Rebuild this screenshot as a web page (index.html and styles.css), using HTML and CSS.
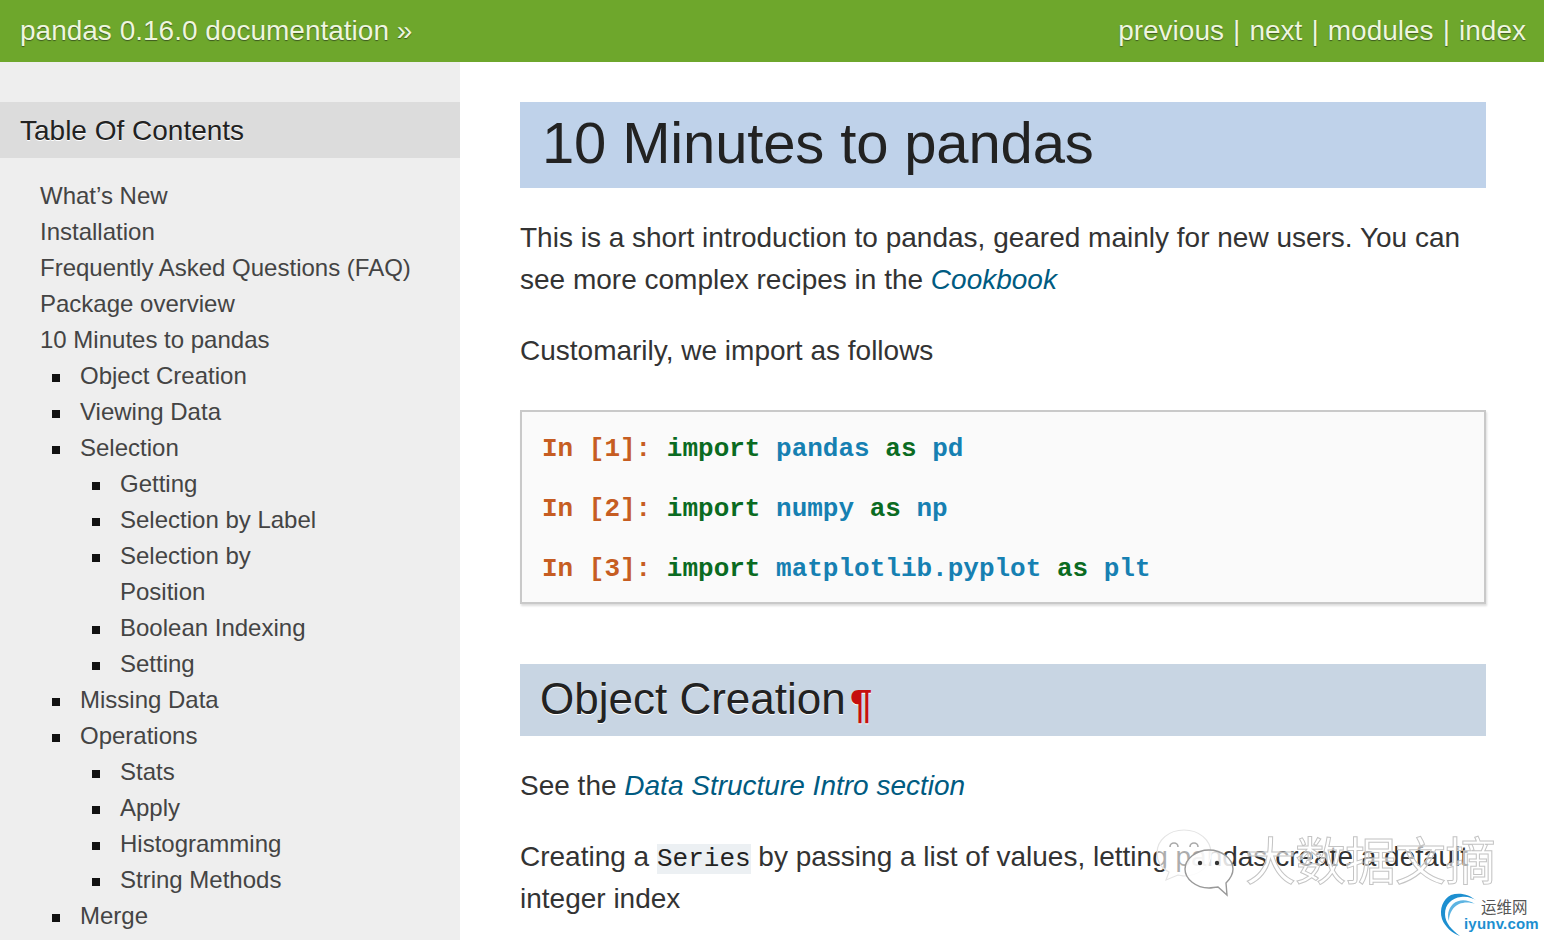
FILE: index.html
```html
<!DOCTYPE html>
<html lang="en">
<head>
<meta charset="utf-8">
<title>10 Minutes to pandas</title>
<link rel="stylesheet" href="styles.css">
</head>
<body>
<header class="topbar">
  <a class="crumb">pandas 0.16.0 documentation »</a>
  <nav class="relnav"><a>previous</a> | <a>next</a> | <a>modules</a> | <a>index</a></nav>
</header>
<div class="page">
  <aside class="sidebar">
    <h3 class="toc-title">Table Of Contents</h3>
    <ul class="toc">
      <li>What’s New</li>
      <li>Installation</li>
      <li>Frequently Asked Questions (FAQ)</li>
      <li>Package overview</li>
      <li>10 Minutes to pandas
        <ul>
          <li>Object Creation</li>
          <li>Viewing Data</li>
          <li>Selection
            <ul>
              <li>Getting</li>
              <li>Selection by Label</li>
              <li>Selection by Position</li>
              <li>Boolean Indexing</li>
              <li>Setting</li>
            </ul>
          </li>
          <li>Missing Data</li>
          <li>Operations
            <ul>
              <li>Stats</li>
              <li>Apply</li>
              <li>Histogramming</li>
              <li>String Methods</li>
            </ul>
          </li>
          <li>Merge</li>
        </ul>
      </li>
    </ul>
  </aside>
  <main class="content">
    <h1>10 Minutes to pandas</h1>
    <p class="intro">This is a short introduction to pandas, geared mainly for new users. You can see more complex recipes in the <a class="ref">Cookbook</a></p>
    <p class="follows">Customarily, we import as follows</p>
    <pre class="code"><span class="pr">In [1]:</span> <span class="kw">import</span> <span class="nm">pandas</span> <span class="kw">as</span> <span class="nm">pd</span>

<span class="pr">In [2]:</span> <span class="kw">import</span> <span class="nm">numpy</span> <span class="kw">as</span> <span class="nm">np</span>

<span class="pr">In [3]:</span> <span class="kw">import</span> <span class="nm">matplotlib.pyplot</span> <span class="kw">as</span> <span class="nm">plt</span></pre>
    <h2>Object Creation <span class="pilcrow">¶</span></h2>
    <p class="see">See the <a class="ref">Data Structure Intro section</a></p>
    <p class="creating">Creating a <code>Series</code> by passing a list of values, letting pandas create a default integer index</p>
  </main>
</div>
<div class="wm">
  <svg class="wm-chat" viewBox="0 0 80 70" width="80" height="70" aria-hidden="true">
    <path class="wm-back" d="M29 2C14 2 2 12 2 25c0 8 4 15 12 19l-3 8 12-5c2 0 4 1 6 1 15 0 27-10 27-23S44 2 29 2z"/>
    <path class="wm-eye" d="M15 19a4 4 0 0 1 8 0M35 19a4 4 0 0 1 8 0"/>
    <path class="wm-front" d="M54 22c-13 0-24 9-24 19s11 19 24 19c3 0 6-1 9-1l9 8-1-12c4-4 7-9 7-14 0-10-11-19-24-19z"/>
    <circle class="wm-dot" cx="45" cy="35" r="2.2"/><circle class="wm-dot" cx="62" cy="35" r="2.2"/>
  </svg>
  <span class="wm-text">大数据文摘</span>
</div>
<div class="logo">
  <svg class="logo-arc" viewBox="0 0 44 47" width="44" height="47" aria-hidden="true">
    <path class="arc-out" d="M38 8C30 1 20-1 12 2 4 6 0 16 3 26c3 8 10 14 18 17C13 37 6 30 6 21 6 11 13 5 22 4c6-1 12 1 16 4z"/>
    <path class="arc-in" d="M36 11C28 6 20 6 14 11 9 16 8 23 10 28c0-8 4-14 10-17 5-2 11-2 16 0z"/>
  </svg>
  <div class="logo-cn">运维网</div>
  <div class="logo-en">iyunv.com</div>
</div>
</body>
</html>
```
FILE: styles.css
```css
html, body { margin: 0; padding: 0; }
body {
  height: 940px;
  overflow: hidden;
  position: relative;
  background: #fff;
  color: #333;
  font-family: "Liberation Sans", Arial, sans-serif;
  font-size: 28px;
}
.topbar {
  height: 62px;
  box-sizing: border-box;
  background: #6ea72c;
  color: #eef6de;
  display: flex;
  justify-content: space-between;
  align-items: center;
  padding: 0 18px 0 20px;
  font-size: 28px;
  text-shadow: 0 1px 1px #3d5a20;
}
.relnav { word-spacing: 1.3px; }
.page { display: flex; height: 878px; overflow: hidden; }
.sidebar {
  width: 460px;
  flex: none;
  background: #eee;
  padding-top: 40px;
  box-sizing: border-box;
  color: #444;
  font-size: 24px;
  line-height: 36px;
}
.toc-title {
  margin: 0;
  height: 56px;
  line-height: 58px;
  padding-left: 20px;
  background: #dcdcdc;
  color: #222;
  font-size: 28px;
  font-weight: normal;
  text-shadow: 0 1px 0 #fff;
}
.toc, .toc ul { list-style: none; margin: 0; padding: 0; }
.toc { padding: 20px 40px 0; width: 380px; }
.toc ul { padding-left: 40px; margin-right: 40px; }
.toc ul li { position: relative; }
.toc ul li::before {
  content: "";
  position: absolute;
  left: -28px;
  top: 16px;
  width: 8px;
  height: 8px;
  background: #111;
}
.content {
  flex: 1;
  padding: 40px 58px 0 60px;
  min-width: 0;
}
h1 {
  margin: 0;
  height: 86px;
  line-height: 82px;
  padding-left: 22px;
  background: #bfd2ea;
  color: #222;
  font-size: 58px;
  font-weight: normal;
  letter-spacing: -0.15px;
}
p { margin: 0; line-height: 42px; color: #333; }
.intro { margin-top: 29px; }
.follows { margin-top: 29px; }
.ref { color: #005b81; font-style: italic; }
.code {
  margin: 38px 0 0;
  height: 194px;
  box-sizing: border-box;
  padding: 22px 20px 0;
  background: #fafafa;
  border: 2px solid #c9c9c9;
  box-shadow: 1px 2px 2px #ddd;
  font-family: "Liberation Mono", "Courier New", monospace;
  font-size: 26px;
  font-weight: bold;
  line-height: 30px;
}
.pr { color: #c65d22; }
.kw { color: #0a6b22; }
.nm { color: #1680b2; }
h2 {
  margin: 60px 0 0;
  height: 72px;
  line-height: 70px;
  padding-left: 20px;
  background: #c8d5e3;
  color: #222;
  font-size: 44px;
  font-weight: normal;
  text-shadow: 0 1px 0 #fff;
}
.pilcrow {
  color: #c60f0f;
  font-size: 40px;
  line-height: 1;
  font-weight: bold;
  margin-left: -8px;
  vertical-align: -4px;
}
.see { margin-top: 29px; }
.creating { margin-top: 29px; }
code {
  font-family: "Liberation Mono", "Courier New", monospace;
  font-size: 26px;
  line-height: 1;
  background: #ecf0f3;
  color: #222;
}
.wm { position: absolute; left: 1155px; top: 828px; display: flex; align-items: flex-start; }
.wm-chat { display: block; }
.wm-back { fill: rgba(255,255,255,.6); stroke: #e4e4e4; stroke-width: 1.2; }
.wm-front { fill: rgba(255,255,255,.85); stroke: #999; stroke-width: 1.4; }
.wm-eye { fill: none; stroke: #aaa; stroke-width: 1.6; }
.wm-dot { fill: #333; }
.wm-text {
  font-family: "Noto Sans CJK SC", sans-serif;
  font-size: 51px;
  line-height: 56px;
  margin: 2px 0 0 10px;
  letter-spacing: -1px;
  color: rgba(255,255,255,.6);
  -webkit-text-stroke: 1px #c4c4c4;
}
.logo { position: absolute; left: 1439px; top: 893px; width: 105px; height: 47px; }
.logo-arc { position: absolute; left: 0; top: 0; overflow: visible; }
.arc-out { fill: #1d8fd0; }
.arc-in { fill: #5db4e2; }
.logo-cn {
  position: absolute; left: 42px; top: 4px;
  font-family: "Noto Sans CJK SC", sans-serif;
  font-size: 15.5px; line-height: 18px; color: #555;
}
.logo-en {
  position: absolute; left: 25px; top: 22px;
  font-size: 15px; line-height: 18px; font-weight: bold; color: #1d8fd0; letter-spacing: .2px;
}
```
